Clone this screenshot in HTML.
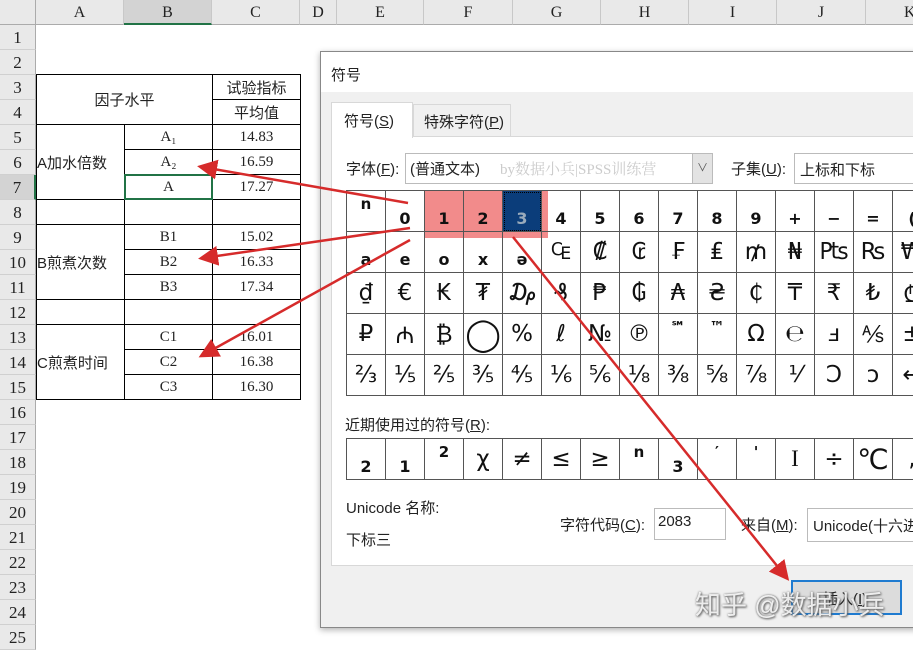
<!DOCTYPE html><html><head><meta charset="utf-8"><style>
*{margin:0;padding:0;box-sizing:border-box}
body{width:913px;height:638px;overflow:hidden;background:#fff;position:relative;font-family:"Liberation Serif","Noto Serif CJK SC",serif;color:#222}
.a{position:absolute}
.ch{position:absolute;top:0;height:25px;background:#e9e9e9;border-right:1px solid #c8c8c8;border-bottom:1px solid #ababab;text-align:center;font-size:16px;line-height:25px}
.rh{position:absolute;left:0;width:36px;height:25px;background:#e9e9e9;border-bottom:1px solid #d0d0d0;border-right:1px solid #ababab;text-align:center;font-size:17px;line-height:25px}
.c{position:absolute;border:1px solid #000;text-align:center;font-size:15px;display:flex;align-items:center;justify-content:center;background:#fff}
.s{font-family:"Liberation Sans","Noto Sans CJK SC",sans-serif}
.g{position:absolute;left:346px;display:grid;grid-template-columns:repeat(15,39px);border-top:1px solid #555;border-left:1px solid #555}
.g div{height:41px;border-right:1px solid #555;border-bottom:1px solid #555;font-family:"DejaVu Sans",sans-serif;font-size:23px;display:flex;align-items:center;justify-content:center;overflow:hidden;color:#111}
.sub{align-items:flex-end!important;padding-bottom:3px;font-size:16px!important;font-weight:bold}
.sup{align-items:flex-start!important;padding-top:4px;font-size:15px!important;font-weight:bold}
</style></head><body>
<div class="a" style="left:0;top:0;width:36px;height:25px;background:#e9e9e9;border-right:1px solid #ababab;border-bottom:1px solid #ababab"></div>
<div class="ch" style="left:36px;width:88px">A</div>
<div class="ch" style="left:124px;width:88px;background:#d3d3d3;border-bottom:2px solid #217346">B</div>
<div class="ch" style="left:212px;width:88px">C</div>
<div class="ch" style="left:300px;width:37px">D</div>
<div class="ch" style="left:337px;width:87px">E</div>
<div class="ch" style="left:424px;width:89px">F</div>
<div class="ch" style="left:513px;width:88px">G</div>
<div class="ch" style="left:601px;width:88px">H</div>
<div class="ch" style="left:689px;width:88px">I</div>
<div class="ch" style="left:777px;width:89px">J</div>
<div class="ch" style="left:866px;width:60px;text-align:left;padding-left:38px">K</div>
<div class="rh" style="top:25px">1</div><div class="rh" style="top:50px">2</div><div class="rh" style="top:75px">3</div><div class="rh" style="top:100px">4</div><div class="rh" style="top:125px">5</div><div class="rh" style="top:150px">6</div><div class="rh" style="top:175px;background:#d3d3d3;border-right:2px solid #217346">7</div><div class="rh" style="top:200px">8</div><div class="rh" style="top:225px">9</div><div class="rh" style="top:250px">10</div><div class="rh" style="top:275px">11</div><div class="rh" style="top:300px">12</div><div class="rh" style="top:325px">13</div><div class="rh" style="top:350px">14</div><div class="rh" style="top:375px">15</div><div class="rh" style="top:400px">16</div><div class="rh" style="top:425px">17</div><div class="rh" style="top:450px">18</div><div class="rh" style="top:475px">19</div><div class="rh" style="top:500px">20</div><div class="rh" style="top:525px">21</div><div class="rh" style="top:550px">22</div><div class="rh" style="top:575px">23</div><div class="rh" style="top:600px">24</div><div class="rh" style="top:625px">25</div>
<div class="c s" style="left:36px;top:74px;width:177px;height:51px">因子水平</div>
<div class="c s" style="left:212px;top:74px;width:89px;height:26px">试验指标</div>
<div class="c s" style="left:212px;top:99px;width:89px;height:26px">平均值</div>
<div class="c s" style="left:36px;top:124px;width:89px;height:76px;justify-content:flex-start">A加水倍数</div>
<div class="c" style="left:124px;top:124px;width:89px;height:26px">A₁</div>
<div class="c" style="left:212px;top:124px;width:89px;height:26px">14.83</div>
<div class="c" style="left:124px;top:149px;width:89px;height:26px">A₂</div>
<div class="c" style="left:212px;top:149px;width:89px;height:26px">16.59</div>
<div class="c" style="left:124px;top:174px;width:89px;height:26px">A</div>
<div class="c" style="left:212px;top:174px;width:89px;height:26px">17.27</div>
<div class="c" style="left:36px;top:199px;width:89px;height:26px"></div>
<div class="c" style="left:124px;top:199px;width:89px;height:26px"></div>
<div class="c" style="left:212px;top:199px;width:89px;height:26px"></div>
<div class="c s" style="left:36px;top:224px;width:89px;height:76px;justify-content:flex-start">B煎煮次数</div>
<div class="c" style="left:124px;top:224px;width:89px;height:26px">B1</div><div class="c" style="left:212px;top:224px;width:89px;height:26px">15.02</div>
<div class="c" style="left:124px;top:249px;width:89px;height:26px">B2</div><div class="c" style="left:212px;top:249px;width:89px;height:26px">16.33</div>
<div class="c" style="left:124px;top:274px;width:89px;height:26px">B3</div><div class="c" style="left:212px;top:274px;width:89px;height:26px">17.34</div>
<div class="c" style="left:36px;top:299px;width:89px;height:26px"></div><div class="c" style="left:124px;top:299px;width:89px;height:26px"></div><div class="c" style="left:212px;top:299px;width:89px;height:26px"></div>
<div class="c s" style="left:36px;top:324px;width:89px;height:76px;justify-content:flex-start">C煎煮时间</div>
<div class="c" style="left:124px;top:324px;width:89px;height:26px">C1</div><div class="c" style="left:212px;top:324px;width:89px;height:26px">16.01</div>
<div class="c" style="left:124px;top:349px;width:89px;height:26px">C2</div><div class="c" style="left:212px;top:349px;width:89px;height:26px">16.38</div>
<div class="c" style="left:124px;top:374px;width:89px;height:26px">C3</div><div class="c" style="left:212px;top:374px;width:89px;height:26px">16.30</div>
<div class="a" style="left:124px;top:174px;width:89px;height:26px;border:2px solid #217346"></div>
<div class="a s" style="left:320px;top:51px;width:600px;height:577px;background:#f0f0f0;border:1px solid #888;box-shadow:0 2px 6px rgba(0,0,0,.3);font-size:15px">
 <div class="a" style="left:0;top:0;right:0;height:40px;background:#fff"></div>
 <div class="a" style="left:10px;top:12px">符号</div>
 <div class="a" style="left:92px;top:52px;width:98px;height:33px;border:1px solid #d8d8d8;border-bottom:none;padding:6px 0 0 10px">特殊字符(<u>P</u>)</div>
 <div class="a" style="left:10px;top:84px;right:0;height:430px;background:#fff;border:1px solid #d8d8d8;border-right:none"></div>
 <div class="a" style="left:10px;top:50px;width:82px;height:36px;background:#fff;border:1px solid #d8d8d8;border-bottom:none;padding:7px 0 0 12px">符号(<u>S</u>)</div>
 <div class="a" style="left:25px;top:106px">字体(<u>F</u>):</div>
 <div class="a" style="left:84px;top:101px;width:308px;height:31px;border:1px solid #bbb;background:#fff;padding:4px 0 0 4px">(普通文本)<span style="color:#ccc;margin-left:20px;font-family:'Liberation Serif','Noto Serif CJK SC',serif">by数据小兵|SPSS训练营</span></div>
 <div class="a" style="left:371px;top:102px;width:20px;height:29px;background:#e3e3e3;border-left:1px solid #bbb;text-align:center;font-size:11px;line-height:29px;color:#555">∨</div>
 <div class="a" style="left:410px;top:106px">子集(<u>U</u>):</div>
 <div class="a" style="left:473px;top:101px;width:140px;height:31px;border:1px solid #bbb;background:#fff;padding:5px 0 0 5px">上标和下标</div>
 <div class="a" style="left:24px;top:362px">近期使用过的符号(<u>R</u>):</div>
 <div class="a" style="left:25px;top:445px">Unicode 名称:</div>
 <div class="a" style="left:25px;top:477px">下标三</div>
 <div class="a" style="left:239px;top:462px">字符代码(<u>C</u>):</div>
 <div class="a" style="left:333px;top:456px;width:72px;height:32px;border:1px solid #bbb;background:#fff;padding:4px 0 0 3px">2083</div>
 <div class="a" style="left:420px;top:462px">来自(<u>M</u>):</div>
 <div class="a" style="left:486px;top:456px;width:200px;height:34px;border:1px solid #bbb;background:#fff;padding:6px 0 0 5px">Unicode(十六进制)</div>
 <div class="a" style="left:470px;top:528px;width:111px;height:35px;border:2px solid #1f7bd0;background:#dcdcdc;padding:6px 0 0 30px">插入(<u>I</u>)</div>
</div>
<div class="a" style="left:424px;top:190px;width:124px;height:48px;background:#f28b8b"></div>
<div class="g" style="top:190px">
<div class="sup">n</div><div class="sub">0</div><div class="sub" style="background:#f28b8b">1</div><div class="sub" style="background:#f28b8b">2</div><div class="sub" style="background:#0b3d7a;color:#9ab;outline:1px dotted #000;outline-offset:-2px">3</div><div class="sub">4</div><div class="sub">5</div><div class="sub">6</div><div class="sub">7</div><div class="sub">8</div><div class="sub">9</div><div class="sub">+</div><div class="sub">−</div><div class="sub">=</div><div class="sub">(</div>
<div class="sub">a</div><div class="sub">e</div><div class="sub">o</div><div class="sub">x</div><div class="sub">ə</div><div>₠</div><div>₡</div><div>₢</div><div>₣</div><div>₤</div><div>₥</div><div>₦</div><div>₧</div><div>₨</div><div>₩</div>
<div>₫</div><div>€</div><div>₭</div><div>₮</div><div>₯</div><div>₰</div><div>₱</div><div>₲</div><div>₳</div><div>₴</div><div>₵</div><div>₸</div><div>₹</div><div>₺</div><div>₾</div>
<div>₽</div><div>₼</div><div>₿</div><div style="font-size:32px">◯</div><div>%</div><div>ℓ</div><div>№</div><div>℗</div><div class="sup">℠</div><div class="sup">™</div><div>Ω</div><div>℮</div><div>ⅎ</div><div>⅍</div><div>±</div>
<div>⅔</div><div>⅕</div><div>⅖</div><div>⅗</div><div>⅘</div><div>⅙</div><div>⅚</div><div>⅛</div><div>⅜</div><div>⅝</div><div>⅞</div><div>⅟</div><div>Ↄ</div><div>ↄ</div><div>←</div>
</div>
<div class="g" style="top:438px">
<div class="sub">2</div><div class="sub">1</div><div class="sup">2</div><div>χ</div><div>≠</div><div>≤</div><div>≥</div><div class="sup">n</div><div class="sub">3</div><div class="sup">′</div><div class="sup">'</div><div style="font-family:'Liberation Serif',serif">I</div><div>÷</div><div style="font-size:28px">℃</div><div>,</div>
</div>
<svg class="a" style="left:0;top:0" width="913" height="638">
<defs><marker id="m" markerWidth="8" markerHeight="8" refX="6" refY="4" orient="auto"><path d="M0,0 L8,4 L0,8 z" fill="#d62b2b"/></marker></defs>
<g stroke="#d62b2b" stroke-width="2.5" fill="none" marker-end="url(#m)">
<line x1="408" y1="203" x2="202" y2="167"/>
<line x1="410" y1="228" x2="203" y2="258"/>
<line x1="410" y1="240" x2="203" y2="355"/>
<line x1="513" y1="237" x2="786" y2="577"/>
</g></svg>
<div class="a s" style="left:695px;top:585px;font-size:26px;color:rgba(255,255,255,.85);text-shadow:0 0 2px #777,1px 1px 2px #555">知乎 @数据小兵</div>
</body></html>
